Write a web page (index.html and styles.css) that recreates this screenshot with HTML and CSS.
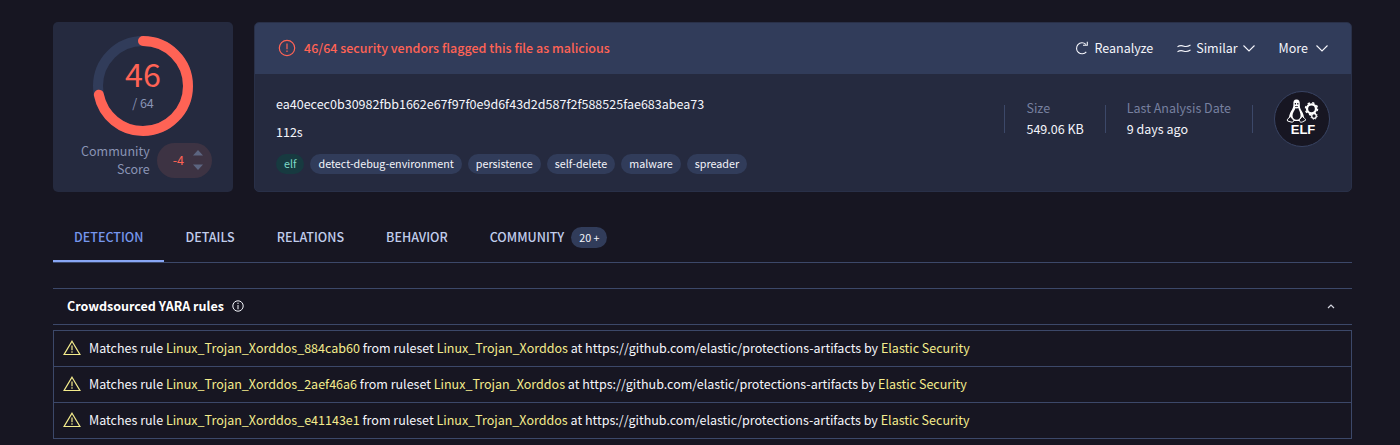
FILE: index.html
```html
<!DOCTYPE html>
<html lang="en">
<head>
<meta charset="utf-8">
<title>File report</title>
<link rel="stylesheet" href="styles.css">
</head>
<body>
<svg class="sprite" aria-hidden="true">
  <symbol id="warning" viewBox="0 0 18 16">
    <path d="M9 1.2 L16.9 14.5 H1.1 Z" fill="none" stroke="currentColor" stroke-width="1.2"/>
    <path d="M9 5.5 V10.2 M9 11.3 V12.7" stroke="currentColor" stroke-width="1.2"/>
  </symbol>
  <symbol id="chevron" viewBox="0 0 12 7">
    <path d="M.5 .5 L6 6 L11.500 .5" fill="none" stroke="currentColor" stroke-width="1.100"/>
  </symbol>
</svg>
<main class="report">
  <section class="summary">
    <div class="score-card">
      <div class="dial">
        <svg class="dial-ring" viewBox="0 0 100 100" aria-hidden="true">
          <circle class="dial-track" cx="50" cy="50" r="45"/>
          <circle class="dial-value" cx="50" cy="50" r="45" pathLength="64" stroke-dasharray="46 64" transform="rotate(-90 50 50)"/>
        </svg>
        <div class="dial-text"><span class="dial-hits">46</span><span class="dial-total">/ 64</span></div>
      </div>
      <div class="community">
        <span class="community-label">Community<br>Score</span>
        <div class="votes">
          <span>-4</span>
          <svg class="votes-arrows" viewBox="0 0 10 20" aria-hidden="true"><path d="M0 5.500 L5 0 L10 5.500 Z M0 14.500 L5 20 L10 14.500 Z"/></svg>
        </div>
      </div>
    </div>
    <div class="file-card">
      <header class="file-head">
        <svg class="alert-icon" viewBox="0 0 18 18" aria-hidden="true"><circle cx="9" cy="9" r="7.700" fill="none" stroke="currentColor" stroke-width="1.200"/><path d="M9 4.500 V10.300 M9 11.500 V13" stroke="currentColor" stroke-width="1.200"/></svg>
        <strong class="verdict">46/64 security vendors flagged this file as malicious</strong>
        <div class="actions">
          <button class="action" type="button">
            <svg class="reload-icon" viewBox="0 0 14 14" aria-hidden="true"><path d="M10.800 3.300 A5.500 5.500 0 1 0 11.300 10.800 M8 4.300 H12.300 V.8" fill="none" stroke="currentColor" stroke-width="1.100"/></svg>
            Reanalyze</button>
          <button class="action" type="button">
            <svg class="similar-icon" viewBox="0 0 14 9" aria-hidden="true"><path d="M.5 2.700 C3 1.200 4.500 1.300 7 2.200 S11 2.600 13.500 1 M.5 7.700 C3 6.200 4.500 6.300 7 7.200 S11 7.600 13.500 6" fill="none" stroke="currentColor" stroke-width="1.100"/></svg>
            Similar
            <svg class="chevron" aria-hidden="true"><use href="#chevron"/></svg></button>
          <button class="action action-more" type="button">More
            <svg class="chevron" aria-hidden="true"><use href="#chevron"/></svg></button>
        </div>
      </header>
      <div class="file-body">
        <div class="identity">
          <div class="hash">ea40ecec0b30982fbb1662e67f97f0e9d6f43d2d587f2f588525fae683abea73</div>
          <div class="name">112s</div>
          <div class="tags">
            <a class="tag tag-type" href="#">elf</a><a class="tag" href="#">detect-debug-environment</a><a class="tag" href="#">persistence</a><a class="tag" href="#">self-delete</a><a class="tag" href="#">malware</a><a class="tag" href="#">spreader</a>
          </div>
        </div>
        <dl class="facts">
          <div class="fact"><dt>Size</dt><dd>549.06 KB</dd></div>
          <div class="fact fact-last"><dt>Last Analysis Date</dt><dd>9 days ago</dd></div>
        </dl>
        <svg class="file-type" viewBox="0 0 56 56" role="img" aria-label="ELF file">
          <circle cx="28" cy="28" r="27.500" fill="#171622" stroke="#394463"/>
          <path fill="#fff" d="M22.500 8.500 C19.900 8.500 19.200 10.600 19.400 13 C19.600 16 18.500 17.800 17.200 20 C16 22 15.200 24.300 15 26.500 L18.500 30 H26.500 L30 26.500 C29.800 24 28.800 21.800 27.500 19.800 C26.200 17.800 25.700 16 25.800 13 C25.900 10.500 25.100 8.500 22.500 8.500 Z"/>
          <path fill="#171622" d="M21.700 17 C23 18 24 17.200 24.300 17 C25 19.500 26.600 21.500 26.600 24.500 C26.600 27 25.300 28.800 22.700 28.800 C20 28.800 18.500 27 18.500 24.500 C18.500 21.500 20.700 19.500 21.700 17 Z"/>
          <path fill="#171622" d="M20.800 12 H22 V13.400 H20.800 Z M23.200 12 H24.400 V13.400 H23.200 Z M21 15 H24 V15.800 H21 Z"/>
          <path fill="#171622" stroke="#fff" stroke-width="1" d="M16.200 25.300 L19.800 29.300 C19.700 31 18.500 31.400 17 31 L13.500 30 C13 28.500 13.700 27.500 15 27 Z M28.300 25.300 L25.500 28.500 C25.200 31.300 27 31.600 28.500 30.900 L31.500 29.300 C31.700 28 31 27.500 29.900 27 Z"/>
          <circle cx="37.500" cy="17.800" r="4.500" fill="none" stroke="#fff" stroke-width="2.300"/>
          <circle cx="37.500" cy="17.800" r="6" fill="none" stroke="#fff" stroke-width="1.500" stroke-dasharray="2.300 2.412"/>
          <circle cx="40" cy="25" r="2.300" fill="#171622" stroke="#fff" stroke-width="1.300"/>
          <circle cx="40" cy="25" r="3.200" fill="none" stroke="#fff" stroke-width="1" stroke-dasharray="1.200 1.313"/>
          <text class="file-type-name" x="29" y="43" text-anchor="middle">ELF</text>
        </svg>
      </div>
    </div>
  </section>
  <nav class="tabs">
    <a class="tab tab-active" href="#">DETECTION</a>
    <a class="tab" href="#">DETAILS</a>
    <a class="tab" href="#">RELATIONS</a>
    <a class="tab" href="#">BEHAVIOR</a>
    <a class="tab" href="#">COMMUNITY <span class="count">20 +</span></a>
  </nav>
  <section class="yara">
    <header class="yara-head">
      <h2>Crowdsourced YARA rules</h2>
      <svg class="info-icon" viewBox="0 0 12 12" aria-hidden="true"><circle cx="6" cy="6" r="5.200" fill="none" stroke="currentColor"/><path d="M6 2.700 V4 M6 5 V9.300" stroke="currentColor"/></svg>
      <button class="collapse" type="button" aria-label="Collapse"><svg class="collapse-icon" viewBox="0 0 8 5" aria-hidden="true"><path d="M1 4 L4 1 L7 4" fill="none" stroke="currentColor" stroke-width="1.200"/></svg></button>
    </header>
    <ul class="rules">
      <li><svg class="warning-icon" aria-hidden="true"><use href="#warning"/></svg><span>Matches rule <a href="#">Linux_Trojan_Xorddos_884cab60</a> from ruleset <a href="#">Linux_Trojan_Xorddos</a> at https://github.com/elastic/protections-artifacts by <a href="#">Elastic Security</a></span></li>
      <li><svg class="warning-icon" aria-hidden="true"><use href="#warning"/></svg><span>Matches rule <a href="#">Linux_Trojan_Xorddos_2aef46a6</a> from ruleset <a href="#">Linux_Trojan_Xorddos</a> at https://github.com/elastic/protections-artifacts by <a href="#">Elastic Security</a></span></li>
      <li><svg class="warning-icon" aria-hidden="true"><use href="#warning"/></svg><span>Matches rule <a href="#">Linux_Trojan_Xorddos_e41143e1</a> from ruleset <a href="#">Linux_Trojan_Xorddos</a> at https://github.com/elastic/protections-artifacts by <a href="#">Elastic Security</a></span></li>
    </ul>
  </section>
</main>
</body>
</html>
```
FILE: styles.css
```css
* { box-sizing: border-box; }
body {
  margin: 0;
  background: #171622;
  color: #f4f5fb;
  font: 14px/20px "Source Sans Pro", "Noto Sans CJK SC", "Noto Sans", sans-serif;
  /* x-height of Source Sans, so the fallback faces keep its apparent size */
  font-size-adjust: 0.486;
}
a { color: inherit; text-decoration: none; }
svg { display: block; flex: none; }
.sprite { display: none; }
.report { padding: 22px 48px 6px 53px; }

.summary { display: flex; gap: 21px; }
.score-card {
  width: 180px;
  padding: 14px 21px;
  border-radius: 5px;
  background: #252a3f;
}
.dial { display: grid; width: 100px; height: 100px; margin: 0 auto; }
.dial-ring, .dial-text { grid-area: 1 / 1; }
.dial-track, .dial-value { fill: none; stroke-width: 10; }
.dial-track { stroke: #313c5a; }
.dial-value { stroke: #ff6355; stroke-linecap: round; }
.dial-text {
  display: flex;
  flex-direction: column;
  align-items: center;
  padding-top: 17px;
}
.dial-hits { color: #ff6355; font-size: 36px; line-height: 40px; }
.dial-total { color: #8a94b5; }
.community {
  display: flex;
  align-items: center;
  justify-content: flex-end;
  gap: 7px;
  margin-top: 6px;
}
.community-label { color: #8a94b5; line-height: 18px; text-align: right; }
.votes {
  display: flex;
  align-items: center;
  gap: 9px;
  height: 35px;
  padding: 0 9px 0 16px;
  border-radius: 18px;
  background: #3d3343;
  color: #ff6355;
}
.votes-arrows { width: 10px; height: 20px; fill: #5c6580; }

.file-card {
  flex: 1;
  min-width: 0;
  border: 1px solid #293048;
  border-radius: 5px;
  background: #252a3f;
  overflow: hidden;
}
.file-head {
  display: flex;
  align-items: center;
  height: 51px;
  padding: 0 23px 1px;
  background: #313c5a;
}
.alert-icon { width: 18px; height: 18px; margin-right: 8px; color: #ff6355; }
.verdict { color: #ff6355; font-weight: 500; }
.actions { display: flex; gap: 24px; margin-left: auto; }
.action {
  display: flex;
  align-items: center;
  gap: 5px;
  padding: 0;
  border: 0;
  background: none;
  color: inherit;
  font: inherit;
  font-size-adjust: inherit;
}
.action-more { gap: 8px; }
.reload-icon { width: 14px; height: 14px; }
.similar-icon { width: 14px; height: 9px; }
.chevron { width: 12px; height: 7px; }
.file-body { display: flex; padding: 17px 21px; }
.identity { flex: 1; }
.hash, .name { line-height: 28px; }
.hash { margin-top: -1px; }
.tags { display: flex; gap: 6px; margin-top: 8px; }
.tag {
  padding: 0 8px;
  border-radius: 10px;
  background: #313c5a;
  font-size: 12px;
  line-height: 20px;
}
.tag-type { background: #173a40; color: #7ddcc9; }
.facts { display: flex; margin: 14px 21px 0 0; height: 28px; }
.fact {
  display: flex;
  flex-direction: column;
  justify-content: center;
  padding: 0 21px 2px;
  border-left: 1px solid #3c4869;
}
.fact-last { border-right: 1px solid #3c4869; }
.fact dt { color: #77809f; line-height: 21px; }
.fact dd { margin: 0; line-height: 21px; }
.file-type { width: 56px; height: 56px; }
.file-type-name { fill: #fff; font: 700 13px "Liberation Sans", sans-serif; font-size-adjust: none; }

.tabs {
  display: flex;
  margin-top: 21px;
  border-bottom: 1px solid #3c4869;
}
.tab {
  display: flex;
  align-items: center;
  gap: 7px;
  height: 49px;
  padding: 1px 21px 0;
  border-bottom: 2px solid transparent;
  color: #c1cdec;
  font-weight: 500;
}
.tab-active { border-color: #88a6f5; color: #7697ed; }
.count {
  padding: 0 8px;
  border-radius: 11px;
  background: #313c5a;
  color: #f4f5fb;
  font-size: 12px;
  line-height: 21px;
  font-weight: 400;
}

.yara { margin-top: 25px; }
.yara-head {
  display: flex;
  align-items: center;
  height: 37px;
  padding: 0 14px 1px;
  border: solid #3c4869;
  border-width: 1px 0;
}
.yara-head h2 { margin: 0 8px 0 0; color: #fff; font-size: 14px; font-weight: 700; }
.info-icon { width: 12px; height: 12px; }
.collapse { margin-left: auto; padding: 3px; border: 0; background: none; color: #d4d5df; }
.collapse-icon { width: 8px; height: 5px; }
.rules {
  margin: 5px 0 0;
  padding: 0;
  border: solid #3c4869;
  border-width: 1px 1px 0;
  list-style: none;
}
.rules li {
  display: flex;
  align-items: center;
  gap: 8px;
  height: 36px;
  padding: 0 9px 1px;
  border-bottom: 1px solid #3c4869;
}
.rules a { color: #f4ec8c; }
.warning-icon { width: 18px; height: 16px; color: #f4ec8c; }
```
